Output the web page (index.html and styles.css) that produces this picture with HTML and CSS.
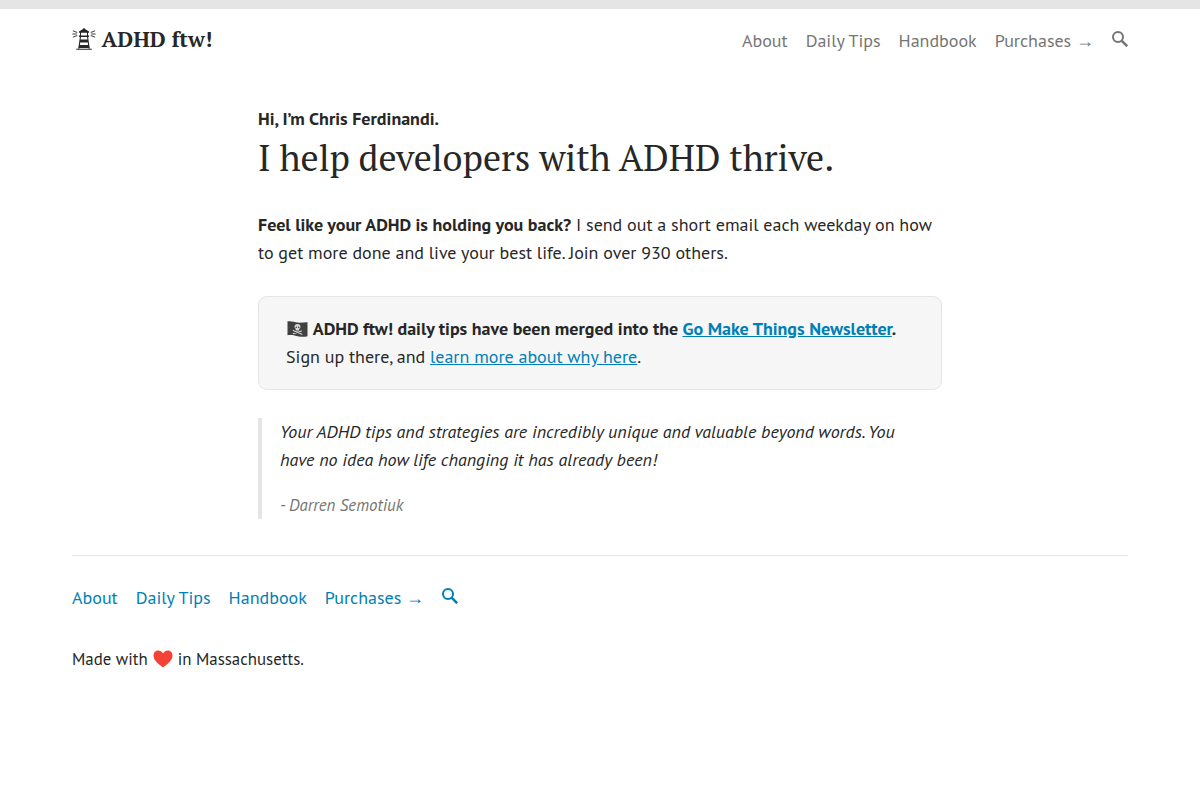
FILE: index.html
```html
<!DOCTYPE html>
<html lang="en">
<head>
    <meta charset="UTF-8">
    <meta name="viewport" content="width=device-width, initial-scale=1.0">
    <title>ADHD ftw!</title>
    <link rel="stylesheet" href="styles.css">
</head>
<body>
    <header class="header container">
        <a class="logo" href="#">
            <svg class="lighthouse" viewBox="0 0 24 24" fill="currentColor" aria-hidden="true">
                <path d="M12 .8l1 1.200 4 2.500v1.300H7V4.500L11 2zM8 5.800h1v3H8zM15 5.800h1v3h-1zM7 8.600h10v1.400H7zM8 12.400h8l.4 3H7.600zM7.200 18h9.600l.6 3H6.600zM8 9.500h1L7.400 21.500H6.200zM15 9.500h1l1.800 12h-1.200zM4.200 21.700h15.600v1H4.200z"/>
                <path d="M5.300 5.500L.9 3.800M4.800 7H.4M5.300 8.500L.9 10.200M18.700 5.500l4.400-1.700M19.200 7h4.400M18.700 8.500l4.400 1.700" fill="none" stroke="currentColor" stroke-width=".9"/>
            </svg>
            <span>ADHD ftw!</span>
        </a>
        <nav class="nav">
            <a href="#">About</a>
            <a href="#">Daily Tips</a>
            <a href="#">Handbook</a>
            <a href="#">Purchases →</a>
            <a href="#" aria-label="Search">
                <svg viewBox="0 0 16 16" fill="none" stroke="currentColor" stroke-width="2"><circle cx="6" cy="6" r="5"/><path d="M9.600 9.600l5.600 5.600" stroke-width="2.600"/></svg>
            </a>
        </nav>
    </header>

    <main class="main">
        <p class="intro">Hi, I’m Chris Ferdinandi.</p>
        <h1>I help developers with ADHD thrive.</h1>

        <p><strong>Feel like your ADHD is holding you back?</strong> I send out a short email each weekday on how to get more done and live your best life. Join over 930 others.</p>

        <div class="callout">
            <strong><svg class="flag" viewBox="0 0 20 16" aria-hidden="true">
                <path d="M0 .3c4-.6 7 .7 10 1.200s7-.5 10-.3v14c-3 .9-6 .8-10 0s-6-1.500-10-.9z" fill="#414141"/>
                <path d="M5.800 9.600l8.600 3.600M14.200 10l-8.400 2.600" stroke="#d8d8d8" stroke-width="1.100" stroke-linecap="round"/>
                <path d="M10 3c-1.900 0-3 1.200-3 2.800 0 1.100.6 1.800 1.300 2.100v1.700h3.400V7.900c.7-.3 1.300-1 1.300-2.100C13 4.200 11.900 3 10 3z" fill="#d8d8d8"/>
                <circle cx="8.800" cy="6.200" r=".8" fill="#414141"/><circle cx="11.200" cy="6.200" r=".8" fill="#414141"/>
            </svg> ADHD ftw! daily tips have been merged into the <a href="#">Go Make Things Newsletter</a>.</strong><br>
            Sign up there, and <a href="#">learn more about why here</a>.
        </div>

        <blockquote>
            <p>Your ADHD tips and strategies are incredibly unique and valuable beyond words. You have no idea how life changing it has already been!</p>
            <cite>- Darren Semotiuk</cite>
        </blockquote>
    </main>

    <footer class="footer container">
        <nav class="nav">
            <a href="#">About</a>
            <a href="#">Daily Tips</a>
            <a href="#">Handbook</a>
            <a href="#">Purchases →</a>
            <a href="#" aria-label="Search">
                <svg viewBox="0 0 16 16" fill="none" stroke="currentColor" stroke-width="2"><circle cx="6" cy="6" r="5"/><path d="M9.600 9.600l5.600 5.600" stroke-width="2.600"/></svg>
            </a>
        </nav>
        <p class="made">Made with <svg class="heart" viewBox="0 0 20 18" aria-hidden="true"><path d="M10 17.500C6 14.500.5 10.800.5 5.600.5 2.600 2.600.6 5.200.6c2 0 3.800 1.100 4.800 3 1-1.900 2.800-3 4.800-3 2.600 0 4.700 2 4.700 5 0 5.200-5.500 8.900-9.500 11.900z" fill="#f44336"/></svg> in Massachusetts.</p>
    </footer>
</body>
</html>
```

FILE: styles.css
```css
* {
    box-sizing: border-box;
}

body {
    margin: 0;
    border-top: 9px solid #e5e5e5;
    background: #fff;
    color: #272727;
    font-family: "PT Sans", "Noto Sans", sans-serif;
    font-size: 18px;
    line-height: 28px;
}

p {
    margin: 0;
}

a {
    color: #0080b5;
}

.container {
    width: 1056px;
    margin: 0 auto;
}

.header {
    display: flex;
    justify-content: space-between;
    padding-top: 17px;
    height: 96px;
}

.logo {
    display: flex;
    gap: 5.5px;
    height: 28px;
    color: #272727;
    font-family: "PT Serif", "Liberation Serif", serif;
    font-size: 21.6px;
    font-weight: bold;
    line-height: 27px;
    text-decoration: none;
}

.lighthouse {
    width: 24px;
    height: 24px;
    margin-top: 1px;
}

.nav {
    display: flex;
    gap: 18px;
    height: 28px;
}

.nav a {
    text-decoration: none;
    white-space: nowrap;
}

.header .nav a {
    color: #757575;
}

.header .nav {
    margin-top: 1px;
}

.nav svg {
    display: block;
    width: 16px;
    height: 16px;
    margin-top: 4px;
}

.main {
    width: 684px;
    margin: 0 auto;
}

.intro {
    font-weight: bold;
}

h1 {
    margin: 0 0 28px;
    font-family: "PT Serif", "Liberation Serif", serif;
    font-size: 36px;
    font-weight: normal;
    line-height: 50px;
    white-space: nowrap;
}

.callout {
    margin-top: 29px;
    padding: 18px 27px;
    border: 1px solid #e5e5e5;
    border-radius: 9px;
    background: #f6f6f6;
}

.flag {
    width: 21px;
    height: 16px;
    margin: 0 1px;
    vertical-align: -2px;
}

blockquote {
    margin: 28px 0 0;
    padding: 0 18px;
    border-left: 4px solid #e5e5e5;
    font-style: italic;
}

cite {
    display: block;
    margin-top: 17px;
    color: #757575;
    font-size: 16.875px;
}

.footer {
    margin-top: 36px;
    padding-top: 28px;
    border-top: 1px solid #e5e5e5;
}

.made {
    margin-top: 33px;
    font-size: 16.875px;
}

.heart {
    width: 20px;
    height: 18px;
    margin: 0 .5px;
    vertical-align: -3px;
}
```
